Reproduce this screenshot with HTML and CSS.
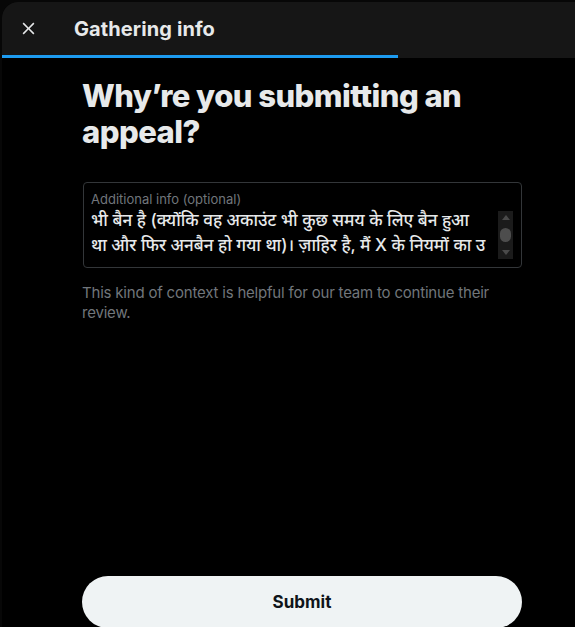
FILE: index.html
```html
<!DOCTYPE html>
<html lang="en">
<head>
<meta charset="utf-8">
<title>Gathering info</title>
<link rel="stylesheet" href="styles.css">
</head>
<body>
<div class="modal">
  <header class="header">
    <div class="header-row">
      <button class="close" aria-label="Close">
        <svg viewBox="0 0 24 24" width="20" height="20"><path d="M10.59 12L4.54 5.96l1.42-1.42L12 10.59l6.04-6.05 1.42 1.42L13.41 12l6.05 6.04-1.42 1.42L12 13.41l-6.04 6.05-1.42-1.42L10.59 12z" fill="#e7e9ea"/></svg>
      </button>
      <h2 class="title">Gathering info</h2>
    </div>
    <div class="progress"><div class="progress-fill"></div></div>
  </header>
  <main class="content">
    <h1 class="heading">Why’re you submitting an appeal?</h1>
    <div class="field">
      <div class="field-body">
        <div class="label">Additional info (optional)</div>
        <div class="value">
          <div class="line">भी बैन है (क्योंकि वह अकाउंट भी कुछ समय के लिए बैन हुआ</div>
          <div class="line">था और फिर अनबैन हो गया था)। ज़ाहिर है, मैं X के नियमों का उ</div>
        </div>
      </div>
      <div class="scrollbar">
        <span class="arrow up"></span>
        <span class="thumb"></span>
        <span class="arrow down"></span>
      </div>
    </div>
    <p class="help">This kind of context is helpful for our team to continue their review.</p>
    <div class="spacer"></div>
    <button class="submit">Submit</button>
  </main>
</div>
</body>
</html>
```
FILE: styles.css
```css
html, body {
  margin: 0;
  padding: 0;
  background: #070707;
  height: 100%;
  overflow: hidden;
}
body {
  font-family: "Inter", "Noto Sans", "Noto Sans Devanagari", "Nirmala UI", "Mangal", sans-serif;
  color: #e7e9ea;
}
.modal {
  margin: 2px 0 0 2px;
  background: #000;
  border-top-left-radius: 16px;
  height: 625px;
  display: flex;
  flex-direction: column;
  overflow: hidden;
}
.header {
  background: #161616;
  height: 56px;
  display: flex;
  flex-direction: column;
}
.header-row {
  flex: 1;
  display: flex;
  align-items: center;
}
.close {
  width: 36px;
  height: 36px;
  margin-left: 8px;
  padding: 0;
  border: 0;
  background: transparent;
  display: flex;
  align-items: center;
  justify-content: center;
}
.close svg { width: 19px; height: 19px; }
.title {
  margin: 0 0 0 28px;
  font-size: 20px;
  font-weight: 700;
  letter-spacing: 0.1px;
  color: #e7e9ea;
}
.progress {
  height: 3px;
  background: #161616;
}
.progress-fill {
  width: 396px;
  height: 3px;
  background: #1d9bf0;
}
.content {
  width: 440px;
  margin-left: 80px;
  flex: 1;
  display: flex;
  flex-direction: column;
}
.heading {
  margin: 20px 0 0;
  font-size: 31px;
  line-height: 36px;
  font-weight: 800;
  letter-spacing: -0.55px;
  color: #e7e9ea;
}
.field {
  margin-top: 32px;
  margin-left: 1px;
  height: 84px;
  border: 1px solid #333639;
  border-radius: 4px;
  display: flex;
}
.field-body {
  flex: 1;
  padding: 8px 0 0 7px;
  min-width: 0;
}
.label {
  font-size: 13px;
  line-height: 16px;
  color: #71767b;
}
.value {
  margin-top: 1px;
  font-size: 17px;
  line-height: 25px;
  font-weight: 500;
  color: #e7e9ea;
}
.line {
  white-space: nowrap;
  overflow: hidden;
}
.scrollbar {
  width: 15px;
  height: 48px;
  margin: 28px 8px 0 6px;
  background: #1b1b1b;
  display: flex;
  flex-direction: column;
  align-items: center;
  justify-content: space-between;
  padding: 4px 0;
  box-sizing: border-box;
}
.arrow {
  width: 0;
  height: 0;
  border-left: 4px solid transparent;
  border-right: 4px solid transparent;
}
.arrow.up { border-bottom: 5px solid #4a4a4a; }
.arrow.down { border-top: 5px solid #4a4a4a; }
.thumb {
  width: 11px;
  height: 14px;
  border-radius: 6px;
  background: #4d4d4d;
}
.help {
  margin: 15px 0 0;
  font-size: 15px;
  line-height: 20px;
  letter-spacing: -0.2px;
  color: #71767b;
}
.spacer { flex: 1; }
.submit {
  height: 52px;
  width: 440px;
  margin-bottom: -1px;
  border: 0;
  border-radius: 26px;
  background: #eff3f4;
  color: #0f1419;
  font-family: "Inter", sans-serif;
  font-size: 17px;
  font-weight: 700;
}
```
